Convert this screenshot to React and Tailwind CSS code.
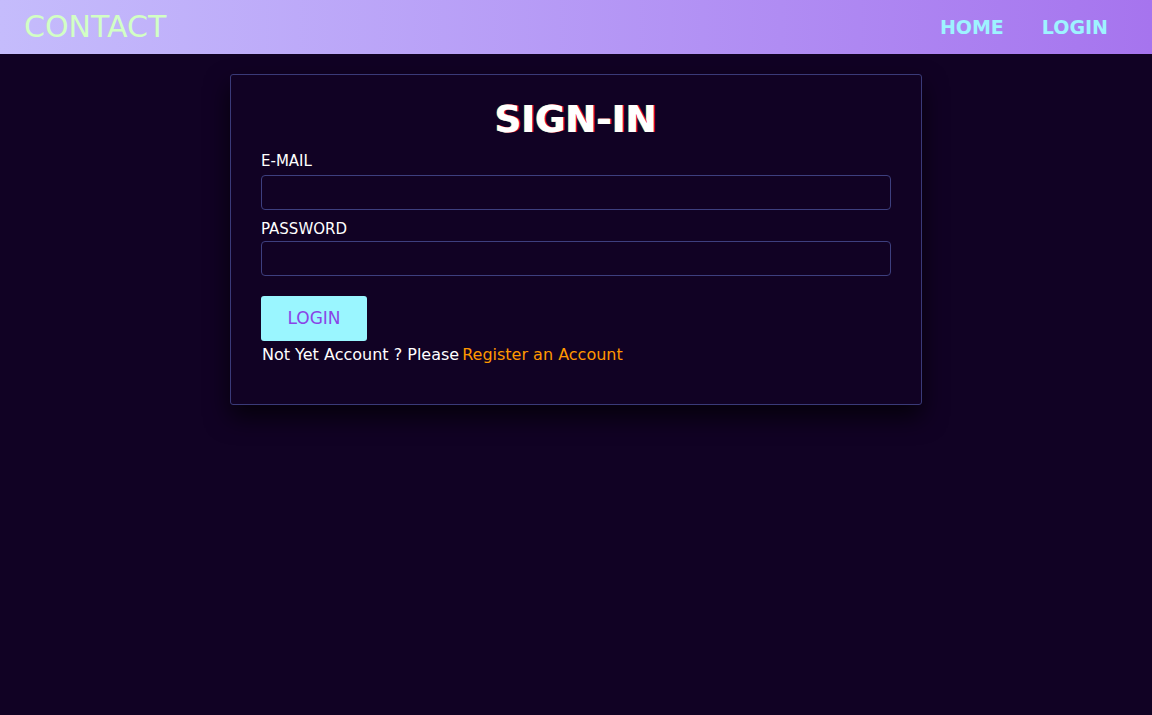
import React, { useState } from 'react';

const font = { fontFamily: '"DejaVu Sans", "Open Sans", sans-serif' };

const Navbar = () => (
  <nav className="flex h-[54px] items-center justify-between bg-gradient-to-r from-[#c5bcfc] to-[#a674ee] pl-[24px] pr-[44px]">
    <a href="#" className="text-[30px] font-normal leading-none text-[#d2ffc4]">CONTACT</a>
    <div className="flex items-center gap-[38px]">
      <a href="#" className="text-[19px] font-bold text-[#9ef3ff]">HOME</a>
      <a href="#" className="text-[19px] font-bold text-[#9ef3ff]">LOGIN</a>
    </div>
  </nav>
);

const SignIn = () => {
  const [email, setEmail] = useState('');
  const [password, setPassword] = useState('');

  return (
    <div className="mx-auto mt-[20px] w-[692px] rounded-[3px] border border-[#3a3a78] bg-[#110224] px-[30px] pb-[38px] pt-[22px] shadow-[0_12px_25px_rgba(0,0,0,0.7)]">
      <h1 className="text-center text-[37px] font-bold leading-[46px] text-white [text-shadow:1px_0_#e1003c,-1px_0_#fff3a0]">
        SIGN-IN
      </h1>
      <form onSubmit={(e) => e.preventDefault()} className="mt-[9px]">
        <label className="block text-[15px] leading-[18px] text-white">E-MAIL</label>
        <input
          type="email"
          value={email}
          onChange={(e) => setEmail(e.target.value)}
          className="mt-[5px] block h-[35px] w-full rounded-[4px] border border-[#3d3f7e] bg-transparent px-2 text-white outline-none"
        />
        <label className="mt-[10px] block text-[15px] leading-[18px] text-white">PASSWORD</label>
        <input
          type="password"
          value={password}
          onChange={(e) => setPassword(e.target.value)}
          className="mt-[3px] block h-[35px] w-full rounded-[4px] border border-[#3d3f7e] bg-transparent px-2 text-white outline-none"
        />
        <button
          type="submit"
          className="mt-[20px] h-[45px] w-[106px] rounded-[3px] bg-[#9af6ff] text-[17px] text-[#8a44e6]"
        >
          LOGIN
        </button>
        <p className="ml-px mt-[3px] text-[16px] leading-[22px] text-white">
          Not Yet Account ? Please<a href="#" className="ml-[3px] text-[#ff9800]">Register an Account</a>
        </p>
      </form>
    </div>
  );
};

export default function App() {
  return (
    <div style={font} className="min-h-[715px] bg-[#110224]">
      <Navbar />
      <SignIn />
    </div>
  );
}
